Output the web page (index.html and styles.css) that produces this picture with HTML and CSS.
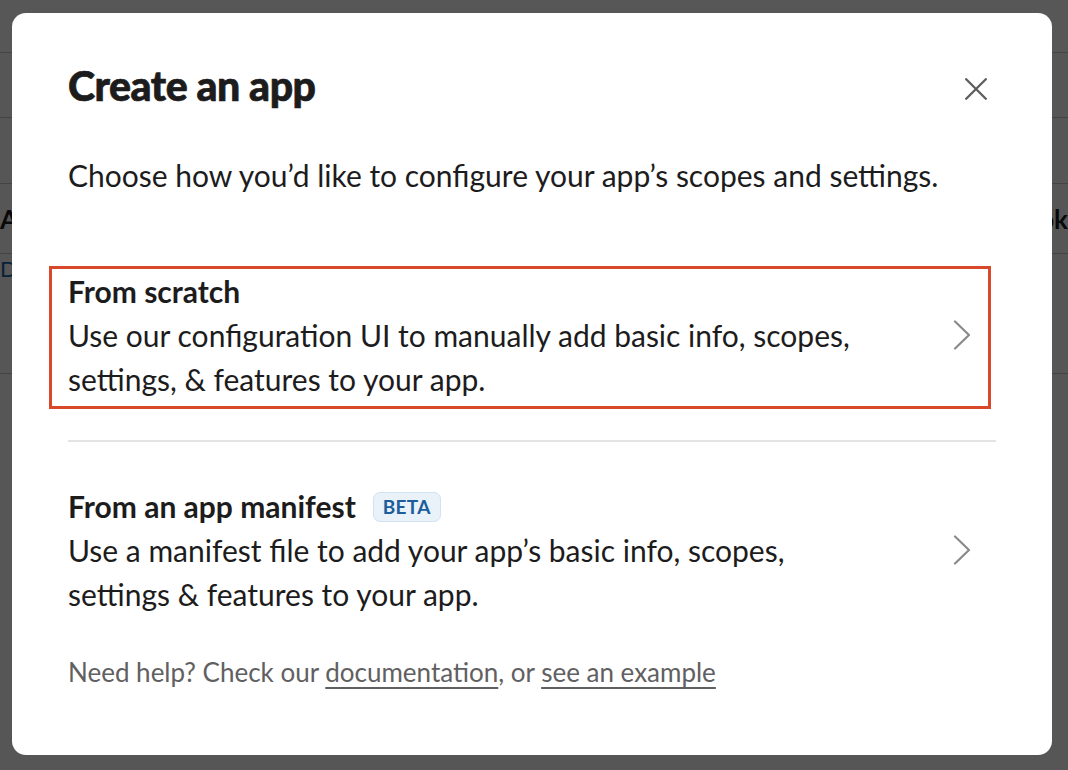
FILE: index.html
```html
<!DOCTYPE html>
<html lang="en">
<head>
<meta charset="utf-8">
<title>Create an app</title>
<link rel="stylesheet" href="styles.css">
</head>
<body>
<div class="page">
  <div class="page-top"></div>
  <div class="page-row r1"></div>
  <div class="page-row r2"></div>
  <div class="page-row r3">
    <span class="cell-title">App</span>
    <span class="cell-title">Webhook</span>
  </div>
  <div class="page-row r4">
    <span class="cell-link">Docs</span>
  </div>
</div>
<div class="overlay"></div>
<div class="modal" role="dialog">
  <div class="modal-head">
    <h1 class="modal-title">Create an app</h1>
    <button class="close" aria-label="Close">
      <svg width="22" height="22" viewBox="0 0 22 22"><path d="M1.2 1.2 L20.8 20.8 M20.8 1.2 L1.2 20.8" stroke="#5e5e5e" stroke-width="2.3" stroke-linecap="round" fill="none"/></svg>
    </button>
  </div>
  <p class="modal-sub">Choose how you’d like to configure your app’s scopes and settings.</p>
  <div class="option highlighted">
    <div class="option-text">
      <div class="option-title">From scratch</div>
      <div class="option-desc">Use our configuration UI to manually add basic info, scopes, settings, &amp; features to your app.</div>
    </div>
    <svg class="chev" width="18" height="30" viewBox="0 0 18 30"><path d="M2 1.5 L16 15 L2 28.5" stroke="#8a8a8a" stroke-width="2.2" fill="none" stroke-linecap="round" stroke-linejoin="round"/></svg>
  </div>
  <div class="divider"></div>
  <div class="option second">
    <div class="option-text">
      <div class="option-title">From an app manifest <span class="beta">BETA</span></div>
      <div class="option-desc">Use a manifest file to add your app’s basic info, scopes, settings &amp; features to your app.</div>
    </div>
    <svg class="chev" width="18" height="30" viewBox="0 0 18 30"><path d="M2 1.5 L16 15 L2 28.5" stroke="#8a8a8a" stroke-width="2.2" fill="none" stroke-linecap="round" stroke-linejoin="round"/></svg>
  </div>
  <p class="help">Need help? Check our <a href="#">documentation</a>, or <a href="#">see an example</a></p>
</div>
</body>
</html>
```
FILE: styles.css
```css
* { box-sizing: border-box; }
html, body { margin: 0; padding: 0; }
body {
  width: 1068px;
  height: 770px;
  overflow: hidden;
  position: relative;
  font-family: Lato, "Noto Sans", sans-serif;
  background: #fbfbfb;
}
.page { width: 1068px; }
.page-top { height: 53px; background: #ffffff; border-bottom: 1px solid #c8c8c8; }
.page-row { border-bottom: 1px solid #c8c8c8; display: flex; justify-content: space-between; align-items: flex-start; }
.r1 { height: 65px; }
.r2 { height: 66px; }
.r3 { height: 70px; padding-top: 20px; }
.r4 { height: 120px; padding-top: 2px; }
.cell-title { font-weight: 700; font-size: 26px; line-height: 30px; color: #1d1c1d; }
.cell-link { font-size: 22px; line-height: 26px; color: #1264a3; }
.overlay { position: absolute; inset: 0; background: rgba(0,0,0,0.66); }

.modal {
  position: absolute;
  left: 12px; top: 13px;
  width: 1040px; height: 742px;
  background: #fff;
  border-radius: 14px;
  padding: 50px 56px 0 56px;
  color: #1d1c1d;
}
.modal-head { display: flex; justify-content: space-between; align-items: center; height: 46px; }
.modal-title {
  margin: 0;
  font-family: "Lato Black", Lato, sans-serif;
  font-size: 41px;
  font-weight: 900;
  letter-spacing: -0.45px;
  line-height: 46px;
  color: #1d1c1d;
  -webkit-text-stroke: 0.7px #1d1c1d;
}
.close { border: 0; background: none; padding: 0; margin-right: 9px; margin-top: 6px; width: 22px; height: 22px; display: block; }
.close svg { display: block; }
.modal-sub { margin: 48px 0 0 0; font-size: 30px; line-height: 36px; color: #1d1c1d; }
.option {
  display: flex; align-items: center; justify-content: space-between;
}
.option-text { max-width: 800px; }
.option-title { font-weight: 700; font-size: 30px; line-height: 44px; display: flex; align-items: center; }
.option-desc { font-size: 30px; line-height: 44px; }
.chev { flex: none; }
.option.highlighted {
  margin: 73px 0 0 -19px;
  width: 942px;
  border: 3px solid #d8482b;
  padding: 0 17px 5px 16px;
}
.divider { height: 2px; background: #e4e4e4; margin: 31px 0 0 0; width: 928px; }
.option.second { margin-top: 42px; width: 928px; padding-right: 25px; }
.beta {
  display: inline-block;
  margin-left: 17px;
  margin-top: 2px;
  background: #e9f1f9;
  border: 1px solid #d2e2f1;
  color: #1d5d9b;
  font-size: 19px;
  font-weight: 700;
  letter-spacing: 0.3px;
  border-radius: 7px;
  padding: 0 9px;
  line-height: 28px;
}
.help { margin: 40px 0 0 0; font-size: 26px; line-height: 32px; color: #616061; }
.help a { color: #616061; text-decoration: underline; text-underline-offset: 5px; text-decoration-thickness: 1.5px; }
```
